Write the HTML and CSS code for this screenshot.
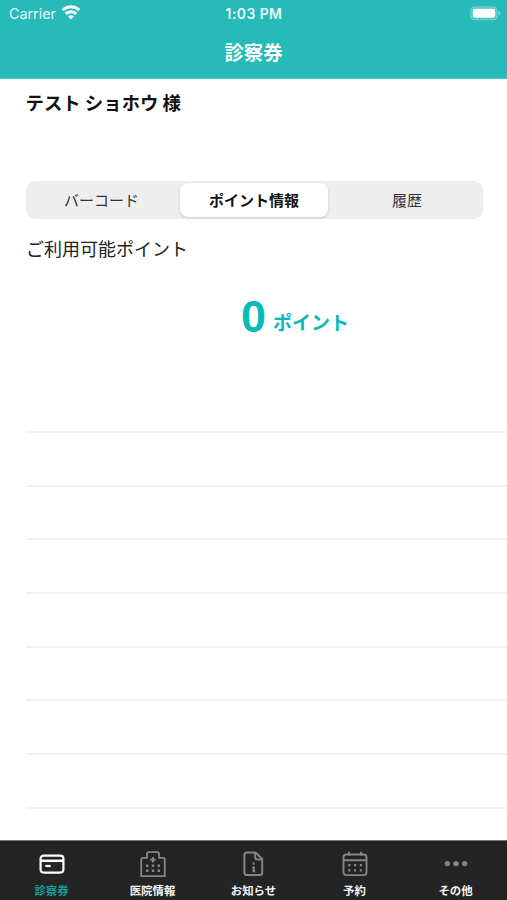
FILE: index.html
```html
<!DOCTYPE html>
<html lang="ja">
<head>
<meta charset="utf-8">
<title>診察券</title>
<link rel="stylesheet" href="styles.css">
</head>
<body>
<div class="app">
  <header class="header">
    <div class="status">
      <div class="carrier"><span>Carrier</span>
        <svg class="wifi" width="20" height="15" viewBox="0 0 20 15" fill="none" stroke="#fff" stroke-width="3"><path d="M1.6 5.3a12 12 0 0 1 16.8 0"/><path d="M4.7 8.9a7.5 7.5 0 0 1 10.6 0"/><path d="M10 14.4 7 11.4a4.2 4.2 0 0 1 6 0Z" fill="#fff" stroke="none"/></svg>
      </div>
      <time class="clock">1:03 PM</time>
      <svg class="battery" width="31" height="15" viewBox="0 0 31 15"><rect x=".8" y=".8" width="26.4" height="13" rx="4" fill="#fff" fill-opacity=".16" stroke="#fff" stroke-opacity=".3"/><rect x="2.8" y="2.8" width="22.4" height="9" rx="2.2" fill="#fff"/><path d="M28.6 5v4.6q1.7-.6 1.7-2.3T28.6 5Z" fill="#fff" fill-opacity=".45"/></svg>
    </div>
    <h1 class="title">診察券</h1>
  </header>
  <main class="content">
    <p class="name">テスト ショホウ 様</p>
    <div class="segments">
      <button class="segment">バーコード</button>
      <button class="segment selected">ポイント情報</button>
      <button class="segment">履歴</button>
    </div>
    <h2 class="caption">ご利用可能ポイント</h2>
    <div class="points"><span class="value">0</span><span class="unit">ポイント</span></div>
    <div class="rows">
      <div class="row"></div><div class="row"></div><div class="row"></div><div class="row"></div>
      <div class="row"></div><div class="row"></div><div class="row"></div><div class="row"></div>
    </div>
  </main>
  <nav class="tabs">
    <a class="tab active">
      <svg width="28" height="28" viewBox="0 0 28 28" fill="none" stroke="currentColor" stroke-width="2.2"><rect x="2.6" y="5.6" width="22.8" height="17" rx="3"/><path d="M3 10.8h22" stroke-width="2.5"/><path d="M7.3 16h5.4" stroke-width="2.2"/></svg>
      <span>診察券</span></a>
    <a class="tab">
      <svg width="28" height="28" viewBox="0 0 28 28" fill="none" stroke="currentColor" stroke-width="1.8"><path d="M8 7.8V3.7q0-1.6 1.6-1.6h8.8q1.6 0 1.6 1.6v4.1h4.2q1.6 0 1.6 1.6v16.7H2.2V9.4q0-1.6 1.6-1.6Z"/><path d="M14 7v5.4M11.3 9.7h5.4" stroke-width="2"/><path d="M7 15.8h2.4M12.8 15.8h2.4M18.6 15.8H21M7 20.8h2.4M12.8 20.8h2.4M18.6 20.8H21" stroke-width="2.4"/></svg>
      <span>医院情報</span></a>
    <a class="tab">
      <svg width="28" height="28" viewBox="0 0 28 28" fill="none" stroke="currentColor" stroke-width="2" stroke-linejoin="round"><path d="M7 2.4h8.6l6.6 6.6v13.4q0 2.6-2.6 2.6H7q-2.6 0-2.6-2.6V5q0-2.6 2.6-2.6Z"/><path d="M15.2 2.4v5.2q0 2 2 2h5"/><path d="M13.6 12.4v2.4M12.4 17.2h1.4v4.2M12.4 21.3h2.8"/></svg>
      <span>お知らせ</span></a>
    <a class="tab">
      <svg width="28" height="28" viewBox="0 0 28 28" fill="none" stroke="currentColor" stroke-width="1.9"><rect x="2.5" y="4.5" width="23" height="20.6" rx="2.8"/><path d="M2.5 10.2h23M8 1.8v3.8M20 1.8v3.8"/><path d="M7.2 15.2h2.2M13 15.2h2.2M18.8 15.2H21M7.2 20.4h2.2M13 20.4h2.2M18.8 20.4H21" stroke-width="2.2"/></svg>
      <span>予約</span></a>
    <a class="tab">
      <svg width="28" height="28" viewBox="0 0 28 28" fill="currentColor"><circle cx="5.4" cy="13.6" r="2.7"/><circle cx="14" cy="13.6" r="2.7"/><circle cx="22.6" cy="13.6" r="2.7"/></svg>
      <span>その他</span></a>
  </nav>
</div>
</body>
</html>
```
FILE: styles.css
```css
* { box-sizing: border-box; }
body { margin: 0; background: #fff; font-family: Inter, "Noto Sans CJK JP", sans-serif; }
h1, h2, p { margin: 0; }
.app { height: 900px; display: flex; flex-direction: column; overflow: hidden; }
.header { height: 79px; flex: none; background: #26bab9; color: #fff; border-bottom: 1px solid #49cbc9; }
.status { height: 27px; display: grid; grid-template-columns: 1fr auto 1fr; align-items: center; padding: 0 6px 0 9px; }
.carrier { display: flex; align-items: center; gap: 5px; font-size: 14.3px; color: #e6f8f7; }
.wifi { margin-top: -2px; }
.clock { font-size: 14px; font-weight: 600; letter-spacing: .4px; margin-left: -2px; color: #e9f9f8; }
.battery { justify-self: end; margin-top: -1px; }
.title { font: 700 19.4px/28px "Noto Sans CJK JP", sans-serif; text-align: center; padding-top: 11px; }
.content { flex: 1; min-height: 0; overflow: hidden; padding-left: 26px; font-family: "Noto Sans CJK JP", sans-serif; }
.name { font-size: 18.4px; font-weight: 700; line-height: 28px; padding-top: 9px; color: #111; margin-left: -.5px; }
.segments { display: grid; grid-template-columns: 150px 152px 1fr; width: 457px; height: 38px; margin-top: 65px; padding: 2px; border-radius: 9px; background: #eee; }
.segment { border: 0; padding: 0; background: none; font: 400 15px/34px "Noto Sans CJK JP", sans-serif; color: #333; }
.segment:first-child { padding-right: 3px; }
.segment:last-child { padding-left: 3px; }
.selected { margin: 0 2px; border-radius: 8px; background: #fff; color: #111; font-weight: 700; box-shadow: 0 1px 3px rgba(0, 0, 0, .16); }
.caption { font-size: 18px; font-weight: 400; line-height: 28px; margin-top: 15px; color: #222; }
.points { display: flex; align-items: baseline; height: 60px; margin: 25px 0 0 215px; color: #08b9b6; }
.value { font: 700 45px/60px "Liberation Sans", sans-serif; width: 32px; }
.unit { font-size: 19px; font-weight: 700; line-height: 28px; transform: translateY(-2px); }
.rows { margin-top: 84px; }
.row { height: 53.7px; border-top: 2px solid #f1f1f1; }
.tabs { height: 60px; flex: none; display: grid; grid-template-columns: repeat(5, 1fr); padding: 0 1px; background: #242424; border-top: 1px solid #777; }
.tab { display: flex; flex-direction: column; align-items: center; padding-top: 9px; color: #858585; }
.tab span { font: 700 11.4px/16px "Noto Sans CJK JP", sans-serif; margin-top: 4px; color: #f4f4f4; }
.active { color: #fff; }
.tab.active span { color: #149e9a; }
```
